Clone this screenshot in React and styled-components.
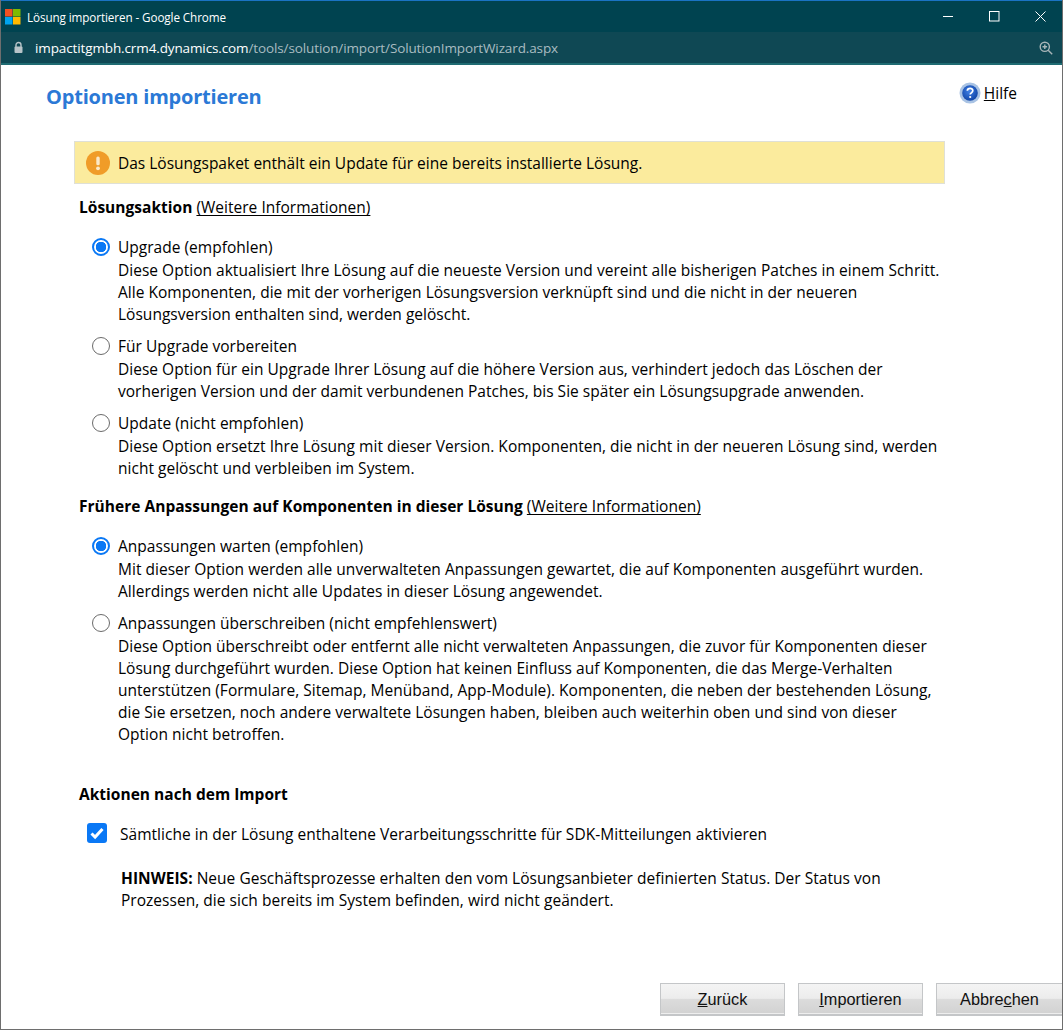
import React from "react";
import styled, { createGlobalStyle } from "styled-components";

const Global = createGlobalStyle`
  html, body { margin: 0; padding: 0; background: #fff; }
  * { box-sizing: border-box; }
  body { font-family: "Open Sans", "Noto Sans", "Liberation Sans", sans-serif; color: #000; }
`;
const Win = styled.div`
  width: 1063px; height: 1030px; display: flex; flex-direction: column; overflow: hidden;
  border-left: 1px solid #6e6e6e; border-right: 1px solid #6e6e6e; border-bottom: 1px solid #6e6e6e; background: #fff;
`;
const TitleBar = styled.div`
  height: 32px; flex: none; background: #004350; border-top: 1px solid #1a73c4; margin: 0 -1px;
  display: flex; align-items: center; padding-left: 5px; color: #fff; font-size: 11.7px; letter-spacing: -0.1px;
`;
const TitleText = styled.span`margin-left: 6px; flex: 1;`;
const WinBtn = styled.div`
  width: 46px; height: 30px; display: flex; align-items: center; justify-content: center;
`;
const AddressBar = styled.div`
  height: 33px; flex: none; background: #0f4854; border-bottom: 2px solid #1f6b72; margin: 0 -1px;
  display: flex; align-items: center; padding: 0 10px 0 13px; font-size: 13.5px; letter-spacing: -0.12px;
`;
const Host = styled.span`color: #fff; margin-left: 11px;`;
const Path = styled.span`color: #a9bcc1; flex: 1;`;
const Content = styled.div`flex: 1; display: flex; flex-direction: column; min-height: 0;`;
const Header = styled.div`
  display: flex; justify-content: space-between; align-items: flex-start; padding: 17px 45px 0 45px; height: 76px;
`;
const Title = styled.h1`
  margin: 0; font-size: 20px; line-height: 30px; font-weight: 700; color: #2b79d6; letter-spacing: -0.2px;
`;
const Help = styled.div`
  display: flex; align-items: center; gap: 3px; font-size: 15.5px; line-height: 24px; margin-top: -1px;
`;
const Notice = styled.div`
  margin-left: 73px; width: 871px; height: 43px; background: #fbeb9d; border: 1px solid #dfe0d6;
  display: flex; align-items: center; gap: 8px; padding-left: 11px; font-size: 15.5px; letter-spacing: 0;
`;
const Section = styled.div`
  margin-left: 78px; font-size: 15.5px; letter-spacing: 0.02px; line-height: 22px; margin-top: ${p => p.$top}px;
  b { font-weight: 700; }
  u { text-underline-offset: 2px; }
`;
const Option = styled.div`
  display: grid; grid-template-columns: 27px 1fr; margin-left: 90px; margin-top: ${p => p.$top}px;
  font-size: 15.5px; letter-spacing: 0.02px; line-height: 22px; width: 900px;
`;
const Radio = styled.span`
  width: 18px; height: 18px; border-radius: 50%; margin: 2px 0 0 1px; display: block;
  border: ${p => p.$on ? "2px solid #0a78f5" : "1px solid #6b6b6b"};
  background: ${p => p.$on ? "radial-gradient(circle, #0a78f5 0 5px, #fff 5.5px)" : "#fff"};
`;
const Label = styled.div`margin-bottom: 1px;`;
const CheckRow = styled.div`
  display: flex; align-items: center; gap: 13px; margin: 17px 0 0 86px; height: 24px; font-size: 15.5px; letter-spacing: 0.03px;
`;
const Box = styled.span`
  width: 20px; height: 20px; margin-bottom: 2px; background: #0a78f5; border-radius: 3px; display: flex; align-items: center; justify-content: center;
`;
const Note = styled.div`
  margin: 21px 0 0 120px; font-size: 15.5px; letter-spacing: 0.03px; line-height: 22px; b { font-weight: 700; }
`;
const Footer = styled.div`
  margin-top: auto; display: flex; justify-content: flex-end; gap: 13px; padding-bottom: 13px; margin-right: -1px;
`;
const Btn = styled.button`
  width: ${p => p.$w}px; height: 33px; padding: 0; border: 1px solid #c4c6c8; border-bottom-width: 2px;
  background: linear-gradient(#f4f4f4 0%, #ececec 48%, #dcdcdc 50%, #d2d2d2 100%);
  box-shadow: inset 0 -1px 0 #eeeeee;
  font-family: "Liberation Sans", Arial, sans-serif; font-size: 16.3px; color: #111;
`;

const Win10 = () => (
  <svg width="16" height="16" viewBox="0 0 16 16">
    <rect x="0" y="0" width="7.5" height="7.5" fill="#f25022" />
    <rect x="8" y="0" width="7.5" height="7.5" fill="#7fba00" />
    <rect x="0" y="8" width="7.5" height="7.5" fill="#00a4ef" />
    <rect x="8" y="8" width="7.5" height="7.5" fill="#ffb900" />
  </svg>
);

export default function App() {
  return (
    <Win>
      <Global />
      <TitleBar>
        <Win10 />
        <TitleText>Lösung importieren - Google Chrome</TitleText>
        <WinBtn><svg width="11" height="11" viewBox="0 0 11 11"><path d="M0 5.5h10" stroke="#fff" /></svg></WinBtn>
        <WinBtn><svg width="11" height="11" viewBox="0 0 11 11"><rect x="0.5" y="0.5" width="9.5" height="9.5" fill="none" stroke="#fff" /></svg></WinBtn>
        <WinBtn><svg width="11" height="11" viewBox="0 0 11 11"><path d="M0.5 0.5l10 10M10.5 0.5l-10 10" stroke="#fff" /></svg></WinBtn>
      </TitleBar>
      <AddressBar>
        <svg width="11" height="13" viewBox="0 0 11 13"><path d="M3 6V4a2.5 2.5 0 015 0v2" fill="none" stroke="#b8c4c8" strokeWidth="1.4" /><rect x="1.5" y="5.5" width="8" height="6.5" rx="1" fill="#b8c4c8" /></svg>
        <Host>impactitgmbh.crm4.dynamics.com</Host>
        <Path>/tools/solution/import/SolutionImportWizard.aspx</Path>
        <svg width="14" height="14" viewBox="0 0 14 14" fill="none" stroke="#a9b5b8" strokeWidth="1.4"><circle cx="5.8" cy="5.8" r="4.6" /><path d="M9.2 9.2l4 4M3.5 5.8h4.6M5.8 3.5v4.6" /></svg>
      </AddressBar>
      <Content>
        <Header>
          <Title>Optionen importieren</Title>
          <Help>
            <svg width="22" height="22" viewBox="0 0 22 22">
              <defs><radialGradient id="hb" cx="45%" cy="40%" r="60%"><stop offset="0" stopColor="#3f80e6" /><stop offset="1" stopColor="#1246a8" /></radialGradient></defs>
              <circle cx="11" cy="11" r="10.5" fill="#a9c3e4" />
              <circle cx="11" cy="11" r="7.8" fill="url(#hb)" />
              <path d="M8.3 8.8c.2-3.2 5.6-3.2 5.5 0 0 2-2.6 1.8-2.6 3.8" fill="none" stroke="#fff" strokeWidth="1.7" />
              <circle cx="11.2" cy="15" r="1.1" fill="#fff" />
            </svg>
            <span><u>H</u>ilfe</span>
          </Help>
        </Header>
        <Notice>
          <svg width="24" height="24" viewBox="0 0 24 24">
            <circle cx="12" cy="12" r="12" fill="#f09c28" />
            <rect x="10.3" y="5.5" width="3.4" height="8.8" rx="1.5" fill="#fbe9c8" />
            <circle cx="12" cy="17.3" r="1.9" fill="#fbe9c8" />
          </svg>
          Das Lösungspaket enthält ein Update für eine bereits installierte Lösung.
        </Notice>
        <Section $top={12}><b>Lösungsaktion</b> <u>(Weitere Informationen)</u></Section>
        <Option $top={18}>
          <Radio $on />
          <div>
            <Label>Upgrade (empfohlen)</Label>
            Diese Option aktualisiert Ihre Lösung auf die neueste Version und vereint alle bisherigen Patches in einem Schritt.<br />
            Alle Komponenten, die mit der vorherigen Lösungsversion verknüpft sind und die nicht in der neueren<br />
            Lösungsversion enthalten sind, werden gelöscht.
          </div>
        </Option>
        <Option $top={10}>
          <Radio />
          <div>
            <Label>Für Upgrade vorbereiten</Label>
            Diese Option für ein Upgrade Ihrer Lösung auf die höhere Version aus, verhindert jedoch das Löschen der<br />
            vorherigen Version und der damit verbundenen Patches, bis Sie später ein Lösungsupgrade anwenden.
          </div>
        </Option>
        <Option $top={10}>
          <Radio />
          <div>
            <Label>Update (nicht empfohlen)</Label>
            Diese Option ersetzt Ihre Lösung mit dieser Version. Komponenten, die nicht in der neueren Lösung sind, werden<br />
            nicht gelöscht und verbleiben im System.
          </div>
        </Option>
        <Section $top={16}><b>Frühere Anpassungen auf Komponenten in dieser Lösung</b> <u>(Weitere Informationen)</u></Section>
        <Option $top={18}>
          <Radio $on />
          <div>
            <Label>Anpassungen warten (empfohlen)</Label>
            Mit dieser Option werden alle unverwalteten Anpassungen gewartet, die auf Komponenten ausgeführt wurden.<br />
            Allerdings werden nicht alle Updates in dieser Lösung angewendet.
          </div>
        </Option>
        <Option $top={10}>
          <Radio />
          <div>
            <Label>Anpassungen überschreiben (nicht empfehlenswert)</Label>
            Diese Option überschreibt oder entfernt alle nicht verwalteten Anpassungen, die zuvor für Komponenten dieser<br />
            Lösung durchgeführt wurden. Diese Option hat keinen Einfluss auf Komponenten, die das Merge-Verhalten<br />
            unterstützen (Formulare, Sitemap, Menüband, App-Module). Komponenten, die neben der bestehenden Lösung,<br />
            die Sie ersetzen, noch andere verwaltete Lösungen haben, bleiben auch weiterhin oben und sind von dieser<br />
            Option nicht betroffen.
          </div>
        </Option>
        <Section $top={38}><b>Aktionen nach dem Import</b></Section>
        <CheckRow>
          <Box><svg width="16" height="16" viewBox="0 0 16 16"><path d="M2.5 8.5l3.6 3.6L13.5 4" fill="none" stroke="#fff" strokeWidth="3" /></svg></Box>
          Sämtliche in der Lösung enthaltene Verarbeitungsschritte für SDK-Mitteilungen aktivieren
        </CheckRow>
        <Note>
          <b>HINWEIS:</b> Neue Geschäftsprozesse erhalten den vom Lösungsanbieter definierten Status. Der Status von<br />
          Prozessen, die sich bereits im System befinden, wird nicht geändert.
        </Note>
        <Footer>
          <Btn $w={125}><u>Z</u>urück</Btn>
          <Btn $w={125}><u>I</u>mportieren</Btn>
          <Btn $w={127}>Abbre<u>c</u>hen</Btn>
        </Footer>
      </Content>
    </Win>
  );
}
